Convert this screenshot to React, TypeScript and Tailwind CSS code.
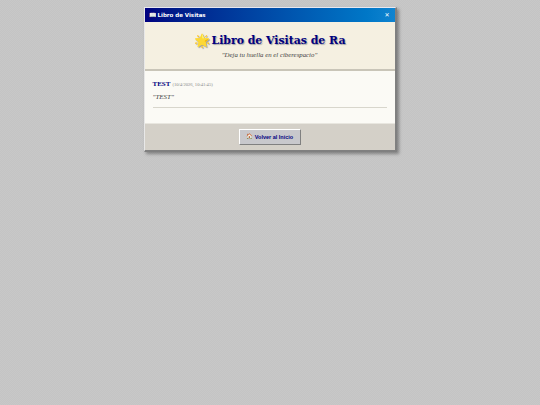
export default function App() {
  return (
    <div className="min-h-[405px] bg-[#c6c6c6] bg-[conic-gradient(#c4c4c4_25%,#c8c8c8_0_50%,#c4c4c4_0_75%,#c8c8c8_0)] bg-[size:2px_2px] pt-[7px] font-['Liberation_Serif',serif]">
      <div className="mx-auto w-[253px] border-t border-l border-t-[#e8e8f0] border-l-[#e8e8e8] border-r-2 border-b-2 border-r-[#808080] border-b-[#808080] bg-[#d4d0c8] shadow-[2px_2px_3px_rgba(0,0,0,0.35)]">
        <div className="flex h-[14px] items-center justify-between bg-gradient-to-r from-[#000080] to-[#1084d0] px-1 font-['DejaVu_Sans',sans-serif] text-[5.5px] font-semibold text-white">
          <span className="flex items-center gap-[2px]">
            <span className="text-[6px] leading-none">📖</span>
            Libro de Visitas
          </span>
          <span className="mr-px text-[6px] leading-none">✕</span>
        </div>

        <div className="h-[49px] border-b-2 border-[#c9c5b8] bg-[#f5f0e1] pt-[10px] text-center">
          <h1 className="flex items-center justify-center gap-[2px] font-['DejaVu_Serif',serif] text-[10.9px] leading-[17px] font-bold text-[#000080] [text-shadow:1px_1px_1px_#a0a0a0]">
            <span className="text-[13px] leading-none">🌟</span>
            Libro de Visitas de Ra
          </h1>
          <p className="mt-[2px] text-[6.8px] italic leading-[8px] text-[#444]">"Deja tu huella en el ciberespacio"</p>
        </div>

        <div className="h-[53px] border-b border-[#e8e6df] bg-[#fbfaf5] px-2 pt-[5px]">
          <div className="border-b border-[#d8d6cc] pb-[5px]">
            <p className="leading-[9px]">
              <span className="text-[7px] font-bold text-[#000080]">TEST</span>
              <span className="ml-[2px] text-[4.6px] text-[#888]">(10/4/2026, 10:41:45)</span>
            </p>
            <p className="mt-[4px] text-[7px] italic leading-[9px] text-[#444]">"TEST"</p>
          </div>
        </div>

        <div className="flex h-[26px] items-center justify-center bg-[#d4d0c8]">
          <button className="flex h-[16px] w-[62px] items-center justify-center gap-[2px] border border-t-white border-l-white border-r-[#808080] border-b-[#808080] bg-[#c8c8cc] font-['Liberation_Sans',sans-serif] text-[5.5px] font-bold text-[#000080]">
            <span className="leading-none">🏠</span>
            Volver al Inicio
          </button>
        </div>
      </div>
    </div>
  );
}
